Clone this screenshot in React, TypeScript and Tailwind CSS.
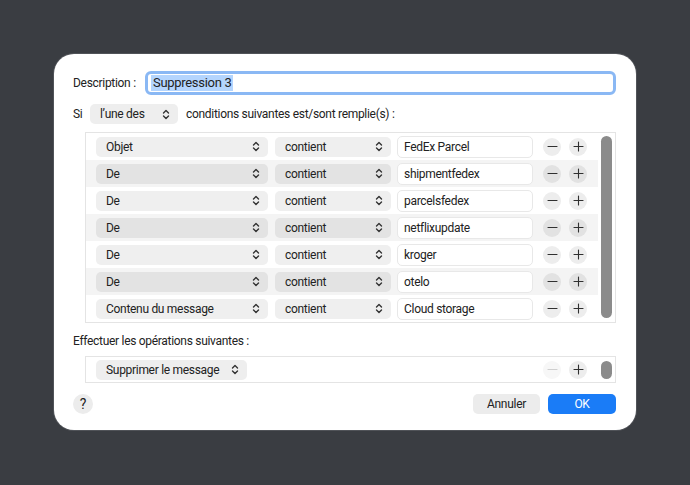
import React from 'react';

const conditions = [
  { field: 'Objet', value: 'FedEx Parcel' },
  { field: 'De', value: 'shipmentfedex' },
  { field: 'De', value: 'parcelsfedex' },
  { field: 'De', value: 'netflixupdate' },
  { field: 'De', value: 'kroger' },
  { field: 'De', value: 'otelo' },
  { field: 'Contenu du message', value: 'Cloud storage' },
];

function Chevrons() {
  return (
    <svg width="8" height="11" viewBox="0 0 8 11" fill="none" className="shrink-0">
      <path d="M1.5 4 L4 1.5 L6.5 4" stroke="#333" strokeWidth="1.4" strokeLinecap="round" strokeLinejoin="round" />
      <path d="M1.5 7 L4 9.5 L6.5 7" stroke="#333" strokeWidth="1.4" strokeLinecap="round" strokeLinejoin="round" />
    </svg>
  );
}

function Popup({ label, className }: { label: string; className: string }) {
  return (
    <div className={`h-[20px] flex items-center justify-between pl-[10px] pr-[8px] rounded-[5px] whitespace-nowrap ${className}`}>
      <span>{label}</span>
      <Chevrons />
    </div>
  );
}

function RoundButton({ kind, tint, disabled }: { kind: 'minus' | 'plus'; tint: string; disabled?: boolean }) {
  const stroke = disabled ? '#cfcfcf' : '#303030';
  return (
    <div className={`w-[18px] h-[18px] rounded-full flex items-center justify-center ${tint}`}>
      <svg width="11" height="11" viewBox="0 0 11 11">
        <path d="M1 5.5 H10" stroke={stroke} strokeWidth="1.1" strokeLinecap="round" />
        {kind === 'plus' && <path d="M5.5 1 V10" stroke={stroke} strokeWidth="1.1" strokeLinecap="round" />}
      </svg>
    </div>
  );
}

export default function App() {
  return (
    <div
      className="w-[690px] h-[485px] bg-[#3a3d42] pt-[54px] pl-[54px] text-[12px] tracking-[-0.3px] text-[#222]"
      style={{ fontFamily: 'Roboto, Inter, sans-serif' }}
    >
      <div className="w-[582px] h-[376px] bg-white rounded-[20px] ring-1 ring-[#505358] pt-[17px] pl-[19px] pr-[20px] flex flex-col">
        {/* Description */}
        <div className="flex items-center h-[24px] whitespace-nowrap">
          <span className="w-[72px]">Description :</span>
          <div className="flex-1 h-[24px] rounded-[6px] border-[3px] border-[#8ab8f4] flex items-center pl-[3px]">
            <span className="bg-[#b4d5fe] px-[2px] leading-[16px] text-[13px]">Suppression 3</span>
          </div>
        </div>

        {/* Si row */}
        <div className="flex items-center mt-[9px] h-[20px] whitespace-nowrap">
          <span className="w-[17px]">Si</span>
          <Popup label="l’une des" className="w-[88px] bg-[#eeeeee]" />
          <span className="ml-[8px]">conditions suivantes est/sont remplie(s) :</span>
        </div>

        {/* Conditions table */}
        <div className="ml-[12px] mt-[8px] border border-[#e4e4e4] flex">
          <div className="flex-1">
            {conditions.map((c, i) => {
              const odd = i % 2 === 1;
              const pop = odd ? 'bg-[#e3e3e3]' : 'bg-[#efefef]';
              const round = odd ? 'bg-[#e2e2e2]' : 'bg-[#ededed]';
              return (
                <div key={i} className={`h-[27px] flex items-center pl-[10px] ${odd ? 'bg-[#f4f4f4]' : 'bg-white'}`}>
                  <Popup label={c.field} className={`w-[172px] ${pop}`} />
                  <Popup label="contient" className={`w-[116px] ml-[7px] ${pop}`} />
                  <div className="w-[136px] ml-[6px] h-[22px] bg-white rounded-[5px] border border-[#e8e8e8] flex items-center pl-[6px]">
                    {c.value}
                  </div>
                  <div className="ml-[10px] flex gap-[8px]">
                    <RoundButton kind="minus" tint={round} />
                    <RoundButton kind="plus" tint={round} />
                  </div>
                </div>
              );
            })}
          </div>
          <div className="w-[17px] pt-[3px] pb-[4px] flex justify-start pl-[3px]">
            <div className="w-[11px] h-full rounded-full bg-[#8b8b8b]" />
          </div>
        </div>

        {/* Actions */}
        <div className="mt-[10px] h-[16px] leading-[16px]">Effectuer les opérations suivantes :</div>
        <div className="ml-[12px] mt-[7px] h-[27px] border border-[#e4e4e4] flex items-center pl-[10px]">
          <Popup label="Supprimer le message" className="w-[151px] bg-[#eeeeee]" />
          <div className="ml-auto flex gap-[8px]">
            <RoundButton kind="minus" tint="bg-[#f7f7f7]" disabled />
            <RoundButton kind="plus" tint="bg-[#ededed]" />
          </div>
          <div className="w-[11px] h-[18px] rounded-full bg-[#8b8b8b] ml-[14px] mr-[3px]" />
        </div>

        {/* Footer */}
        <div className="mt-[11px] flex items-center h-[20px]">
          <div className="w-[20px] h-[20px] rounded-full bg-[#ececec] flex items-center justify-center text-[14px]">?</div>
          <div className="ml-auto w-[67px] h-[20px] rounded-[5px] bg-[#ececec] flex items-center justify-center">Annuler</div>
          <div className="ml-[8px] w-[68px] h-[20px] rounded-[5px] bg-[#1a7cf7] text-white flex items-center justify-center">OK</div>
        </div>
      </div>
    </div>
  );
}
